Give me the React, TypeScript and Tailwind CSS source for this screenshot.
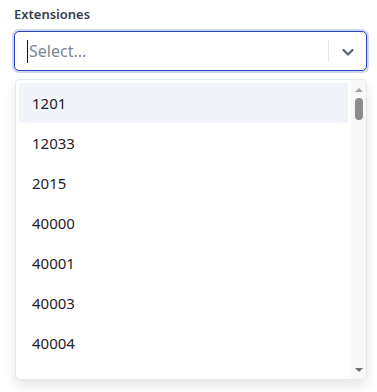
const OPTIONS = ["1201", "12033", "2015", "40000", "40001", "40003", "40004", "40005", "40006"];

function Chevron() {
  return (
    <svg width="14" height="14" viewBox="0 0 14 14" fill="none">
      <polyline points="2.5,5 7,9.5 11.5,5" stroke="#5b6473" strokeWidth="2.4" strokeLinecap="round" strokeLinejoin="round" />
    </svg>
  );
}

function Scrollbar() {
  return (
    <div className="flex w-[15px] shrink-0 flex-col items-center bg-[#f8f8f8]">
      <div className="mt-[8px] h-0 w-0 border-x-[4px] border-b-[4px] border-x-transparent border-b-[#a3a3a3]" />
      <div className="mt-[6px] h-[22px] w-[8px] rounded-full bg-[#8c8c8c]" />
      <div className="flex-1" />
      <div className="mb-[7px] h-0 w-0 border-x-[4px] border-t-[4px] border-x-transparent border-t-[#6f6f6f]" />
    </div>
  );
}

export default function App() {
  return (
    <div className="h-[392px] w-[377px] overflow-hidden bg-white pl-[14px] pr-[10px] pt-[4px] font-['Noto_Sans',sans-serif]">
      <label className="block text-[13px] font-semibold leading-[20px] text-[#374151]">Extensiones</label>

      {/* Focused control */}
      <div className="mt-[7px] flex h-[40px] items-center rounded-[5px] border border-[#2743c4] bg-white shadow-[0_0_0_2px_rgba(120,140,220,0.35)]">
        <div className="flex flex-1 items-center pl-[12px]">
          <span className="h-[23px] w-px bg-[#111]" />
          <span className="ml-px text-[16px] leading-[24px] text-[#7b8494]">Select...</span>
        </div>
        <span className="h-[22px] w-px bg-[#e3e6ea]" />
        <div className="flex w-[37px] items-center justify-center pt-px">
          <Chevron />
        </div>
      </div>

      {/* Menu */}
      <div className="mt-[8px] ml-px flex h-[301px] overflow-hidden rounded-[5px] border border-[#e4e7ec] bg-white shadow-[0_6px_12px_rgba(15,23,42,0.1)]">
        <ul className="flex-1 px-[3px] pt-[3px]">
          {OPTIONS.map((o, i) => (
            <li
              key={o}
              className={`flex h-[40px] items-center pl-[13px] text-[15px] text-[#1f2328] ${i === 0 ? "bg-[#f1f4f9]" : ""}`}
            >
              {o}
            </li>
          ))}
        </ul>
        <Scrollbar />
      </div>
    </div>
  );
}
